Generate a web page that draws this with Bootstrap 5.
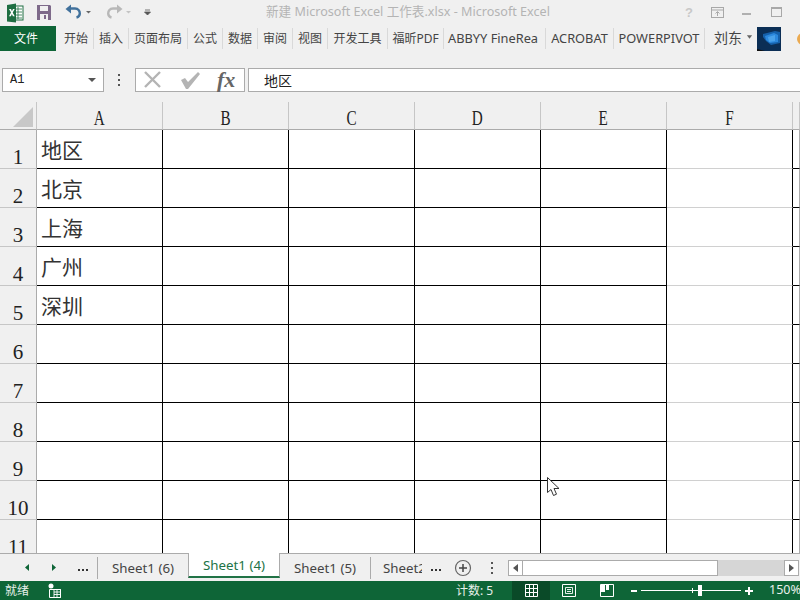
<!DOCTYPE html>
<html lang="zh-CN">
<head>
<meta charset="utf-8">
<title>新建 Microsoft Excel 工作表.xlsx - Microsoft Excel</title>
<link href="https://cdn.jsdelivr.net/npm/bootstrap@5.3.0/dist/css/bootstrap.min.css" rel="stylesheet">
<style>
html,body{margin:0;height:600px;overflow:hidden;background:#f0f0f0}
.xl-app{position:relative;width:800px;height:600px;overflow:hidden;background:#f0f0f0;font-family:"Noto Sans","Noto Sans CJK SC",sans-serif;font-size:12px;color:#444}
.xl-title{height:26px;flex:none;position:relative}
.xl-title svg{flex:none}
.xl-caption{position:absolute;left:266px;top:3px;font-size:12.6px;line-height:18px;color:#b4b4b4;white-space:nowrap}
.xl-tabs{height:25px;flex:none;white-space:nowrap;overflow:hidden}
.xl-file{width:56px;height:25px;background:#0e6537;color:#fff;margin-right:3px;flex:none;font-size:12px;padding-right:4px}
.xl-rt{height:21px;border-right:1px solid #d9d9d9;flex:none;overflow:hidden;justify-content:center;line-height:21px;font-size:12px}
.w35{width:35px}.w59{width:59px}.w60{width:60px}.w56{width:56px}.w102{width:102px;justify-content:flex-start;padding-left:4px}.w68{width:68px}.w91{width:91px}
.xl-lat{font-size:12.8px}
.xl-user{width:52px;padding-left:9px;padding-bottom:3px;flex:none;font-size:14px}
.xl-user svg{flex:none}
.xl-pic{width:24px;height:24px;flex:none;margin-right:16px}
.xl-orange{width:12px;height:12px;border-radius:50%;background:#ebaa50;flex:none}
.xl-fbar{height:24px;margin-top:17px;flex:none}
.xl-name{width:102px;height:24px;margin-left:2px;background:#fff;border:1px solid #ababab;padding:0 7px;font-family:"Liberation Mono",monospace;font-size:12px;color:#222;flex:none}
.xl-dots{width:31px;flex:none}
.xl-btns{width:110px;height:24px;border:1px solid #ababab;background:#fff;flex:none}
.xl-fx{font-family:"Liberation Serif",serif;font-style:italic;font-weight:700;font-size:22px;line-height:20px;color:#666;margin-left:15px}
.xl-input{flex:1;height:24px;margin-left:3px;background:#fff;border:solid #ababab;border-width:1px 0 1px 1px;padding-left:15px;font-size:14px;line-height:22px;color:#222;font-family:"Noto Sans CJK SC",sans-serif}
.xl-gridwrap{margin-top:10px;flex:1;min-height:0;overflow:hidden;position:relative}
.xl-grid{border-collapse:separate;border-spacing:0;table-layout:fixed;width:800px}
.xl-grid th,.xl-grid td{padding:0;box-sizing:border-box}
.xl-grid thead th{height:28px;background:#f0f0f0;border-right:1px solid #c6c6c6;border-bottom:1px solid #ababab;text-align:center;font:400 20px/22px "Liberation Serif",serif;color:#222;vertical-align:middle;padding-top:5px}
.xl-letter{display:inline-block;transform:scaleX(.76)}
.xl-grid tbody th{height:39px;width:37px;background:#f0f0f0;border-right:1px solid #ababab;border-bottom:1px solid #c6c6c6;text-align:center;vertical-align:bottom;font:400 21px/22px "Liberation Serif",serif;color:#222}
.xl-grid td{height:39px;background:#fff;border-right:1px solid #000;border-bottom:1px solid #000;font:400 21px/24px "Noto Sans CJK SC",sans-serif;color:#333;padding:7px 0 0 4px;vertical-align:top;white-space:nowrap}
.xl-grid td.xl-lite{border-bottom-color:#d0d0d0}
.xl-grid td.xl-edge{border-right:1px solid #ababab}
.xl-grid thead th.xl-corner{position:relative;padding:0}
.xl-corner svg{position:absolute;left:13px;top:5px}
.c-head{width:37px}.c-col{width:126px}.c-end{width:7px}
.xl-sheets{height:28px;flex:none;border-top:1px solid #ababab;font-size:13.3px;color:#444;white-space:nowrap}
.xl-nav{width:98px;height:22px;flex:none;position:relative}
.xl-nav svg{position:absolute;left:0;top:-3px}
.xl-st{height:22px;flex:none;line-height:22px;text-align:center;overflow:hidden}
.xl-sep{border-right:1px solid #ababab}
.st1{width:90px}.st3{width:91px}
.st-active{width:92px;height:25px;margin-top:-1px;align-self:flex-start;background:#fff;border:solid #ababab;border-width:0 1px;border-bottom:2px solid #217346;color:#217346;line-height:24px;box-sizing:border-box;flex:none;text-align:center}
.st4{width:51px;margin-right:2px;text-align:left;padding-left:12px}
.xl-more{width:84px;flex:none}
.xl-scroll{width:291px;height:16px;flex:none;background:#d6d6d6;align-self:flex-start;margin-top:6px}
.xl-sbtn{width:15px;height:16px;background:#fff;border:1px solid #ababab;flex:none}
.xl-thumb{width:195px;height:16px;background:#fff;border:1px solid #ababab;border-left:0;flex:none}
.xl-status{height:19px;background:#0e6537;color:#e8f0ea;flex:none;font-size:12px;white-space:nowrap}
.xl-status svg{flex:none}
.xl-ready{width:48px;padding-left:5px;flex:none}
.xl-count{margin-left:395px;width:56px;flex:none}
.xl-view{width:38px;height:19px;flex:none}
.xl-view-on{background:#0a4a28}
.xl-zoom{width:138px;margin-left:5px}
.xl-pct{flex:none;font-size:12.5px}
.xl-cursor{position:absolute;left:547px;top:477px}
</style>
</head>
<body>
<div class="xl-app d-flex flex-column">
  <div class="xl-title d-flex align-items-center">
    <svg width="230" height="26" viewBox="0 0 230 26">
      <rect x="11" y="6" width="12" height="14" fill="#fff" stroke="#1e6e42"/>
      <path d="M15 9h7M15 12h7M15 15h7M15 18h7M18 7v12" stroke="#1e6e42" stroke-width=".8"/>
      <path d="M7 5l9-1.500v19L7 21.500z" fill="#1e6e42"/>
      <path d="M9 9h2l.9 2.200L13 9h1.700l-2 3.500 2 3.700h-1.800l-1-2.300-1 2.300H9l2-3.700z" fill="#fff"/>
      <path d="M37 5h13l1 1v14H37z" fill="#7e6a8a"/>
      <rect x="40" y="6" width="8" height="5" fill="#f0f0f0"/>
      <rect x="40" y="14" width="8" height="6" fill="#f0f0f0"/>
      <rect x="44" y="15" width="2" height="4" fill="#7e6a8a"/>
      <path d="M69 8.500h6c3.500 0 4.800 3 4.800 5s-1.300 3.500-3.300 4" fill="none" stroke="#41719c" stroke-width="2.400"/>
      <path d="M71 4.500l-5.500 4.500 5.500 4.500z" fill="#41719c"/>
      <path d="M86 11h5l-2.500 2.500z" fill="#666"/>
      <path d="M119 8.500h-6c-3.500 0-4.800 3-4.800 5s1.300 3.500 3.300 4" fill="none" stroke="#b8b8b8" stroke-width="2.400"/>
      <path d="M117 4.500l5.500 4.500-5.500 4.500z" fill="#b8b8b8"/>
      <path d="M126 11h5l-2.500 2.500z" fill="#c4c4c4"/>
      <path d="M145 10h5M144.500 12h6l-3 3z" fill="#555" stroke="#555" stroke-width=".8"/>
    </svg>
    <span class="xl-caption">新建 Microsoft Excel 工作表.xlsx - Microsoft Excel</span>
    <svg class="ms-auto" width="120" height="26" viewBox="680 0 120 26">
      <text x="685" y="17" font-family="Liberation Sans, sans-serif" font-weight="700" font-size="13" fill="#c8c8c8">?</text>
      <rect x="711.500" y="7.500" width="12" height="10" fill="none" stroke="#a8a8a8"/>
      <path d="M711 10h13M717.500 16v-4M715.500 13.500l2-2 2 2" fill="none" stroke="#a8a8a8"/>
      <rect x="742" y="13" width="9" height="2" fill="#b0b0b0"/>
      <rect x="771.500" y="7.500" width="10" height="9" fill="none" stroke="#a8a8a8"/>
      <rect x="771" y="7" width="11" height="2" fill="#a8a8a8"/>
    </svg>
  </div>
  <div class="xl-tabs d-flex align-items-center">
    <div class="xl-file d-flex align-items-center justify-content-center">文件</div>
    <div class="xl-rt d-flex w35">开始</div>
    <div class="xl-rt d-flex w35">插入</div>
    <div class="xl-rt d-flex w59">页面布局</div>
    <div class="xl-rt d-flex w35">公式</div>
    <div class="xl-rt d-flex w35">数据</div>
    <div class="xl-rt d-flex w35">审阅</div>
    <div class="xl-rt d-flex w35">视图</div>
    <div class="xl-rt d-flex w60">开发工具</div>
    <div class="xl-rt d-flex w56">福昕PDF</div>
    <div class="xl-rt d-flex w102 xl-lat">ABBYY FineRea</div>
    <div class="xl-rt d-flex w68 xl-lat">ACROBAT</div>
    <div class="xl-rt d-flex w91 xl-lat">POWERPIVOT</div>
    <div class="xl-user d-flex align-items-center gap-1">刘东<svg width="7" height="4" viewBox="0 0 8 4"><path d="M1 0h6L4 4z" fill="#666"/></svg></div>
    <svg class="xl-pic" width="24" height="24" viewBox="0 0 24 24">
      <rect width="24" height="24" fill="#0b2e55"/>
      <path d="M6 7l12-3 5 1v11l-9 2-5-4-3-4z" fill="#1560aa"/>
      <path d="M8 9l9-3 4 2v7l-8 1-4-3z" fill="#2b88dd"/>
      <path d="M11 10l7-2v6l-6 1z" fill="#4aa2ea"/>
      <path d="M0 22l8 2H0z" fill="#111"/>
    </svg>
    <div class="xl-orange"></div>
  </div>
  <div class="xl-fbar d-flex align-items-center">
    <div class="xl-name d-flex align-items-center justify-content-between">A1
      <svg width="8" height="4" viewBox="0 0 8 4"><path d="M0 0h8L4 4z" fill="#555"/></svg>
    </div>
    <div class="xl-dots d-flex justify-content-center">
      <svg width="3" height="12" viewBox="0 0 3 12"><path d="M0 0h2v2H0zM0 5h2v2H0zM0 10h2v2H0z" fill="#555"/></svg>
    </div>
    <div class="xl-btns d-flex align-items-center">
      <svg class="ms-2" width="58" height="18" viewBox="0 0 58 18">
        <path d="M1 1l15 15M16 1L1 16" stroke="#b4b4b4" stroke-width="2.400" fill="none"/>
        <path d="M37 9l4-2 3 4 10-10 2 2-12 15h-2z" fill="#b4b4b4"/>
      </svg>
      <span class="xl-fx">fx</span>
    </div>
    <div class="xl-input">地区</div>
  </div>
  <div class="xl-gridwrap">
    <table class="xl-grid">
      <colgroup><col class="c-head"><col class="c-col"><col class="c-col"><col class="c-col"><col class="c-col"><col class="c-col"><col class="c-col"><col class="c-end"></colgroup>
      <thead>
        <tr>
          <th class="xl-corner"><svg width="20" height="20" viewBox="0 0 20 20"><path d="M20 0v20H0z" fill="#c8c8c8"/></svg></th>
          <th><span class="xl-letter">A</span></th><th><span class="xl-letter">B</span></th><th><span class="xl-letter">C</span></th><th><span class="xl-letter">D</span></th><th><span class="xl-letter">E</span></th><th><span class="xl-letter">F</span></th><th></th>
        </tr>
      </thead>
      <tbody>
        <tr><th>1</th><td>地区</td><td></td><td></td><td></td><td></td><td class="xl-lite"></td><td class="xl-edge"></td></tr>
        <tr><th>2</th><td>北京</td><td></td><td></td><td></td><td></td><td class="xl-lite"></td><td class="xl-edge"></td></tr>
        <tr><th>3</th><td>上海</td><td></td><td></td><td></td><td></td><td class="xl-lite"></td><td class="xl-edge"></td></tr>
        <tr><th>4</th><td>广州</td><td></td><td></td><td></td><td></td><td class="xl-lite"></td><td class="xl-edge"></td></tr>
        <tr><th>5</th><td>深圳</td><td></td><td></td><td></td><td></td><td class="xl-lite"></td><td class="xl-edge"></td></tr>
        <tr><th>6</th><td></td><td></td><td></td><td></td><td></td><td class="xl-lite"></td><td class="xl-edge"></td></tr>
        <tr><th>7</th><td></td><td></td><td></td><td></td><td></td><td class="xl-lite"></td><td class="xl-edge"></td></tr>
        <tr><th>8</th><td></td><td></td><td></td><td></td><td></td><td class="xl-lite"></td><td class="xl-edge"></td></tr>
        <tr><th>9</th><td></td><td></td><td></td><td></td><td></td><td class="xl-lite"></td><td class="xl-edge"></td></tr>
        <tr><th>10</th><td></td><td></td><td></td><td></td><td></td><td class="xl-lite"></td><td class="xl-edge"></td></tr>
        <tr><th>11</th><td></td><td></td><td></td><td></td><td></td><td class="xl-lite"></td><td class="xl-edge"></td></tr>
      </tbody>
    </table>
  </div>
  <div class="xl-sheets d-flex align-items-center">
    <div class="xl-nav xl-sep">
      <svg width="96" height="27" viewBox="0 0 96 27">
        <path d="M29 10v7l-4-3.500z" fill="#0e6537"/>
        <path d="M52 10v7l4-3.500z" fill="#0e6537"/>
        <path d="M78 15h2v2h-2zM82 15h2v2h-2zM86 15h2v2h-2z" fill="#333"/>
      </svg>
    </div>
    <div class="xl-st st1">Sheet1 (6)</div>
    <div class="st-active">Sheet1 (4)</div>
    <div class="xl-st st3 xl-sep">Sheet1 (5)</div>
    <div class="xl-st st4">Sheet2</div>
    <svg class="xl-more" width="84" height="27" viewBox="0 0 84 27">
      <path d="M7 15h2v2H7zM11 15h2v2h-2zM15 15h2v2h-2z" fill="#333"/>
      <circle cx="39" cy="14" r="7.500" fill="none" stroke="#666" stroke-width="1.200"/>
      <path d="M35 14h8M39 10v8" stroke="#444" stroke-width="1.500"/>
      <path d="M67 8h2v2h-2zM67 13h2v2h-2zM67 18h2v2h-2z" fill="#555"/>
    </svg>
    <div class="xl-scroll d-flex">
      <div class="xl-sbtn d-flex align-items-center justify-content-center"><svg width="5" height="8" viewBox="0 0 5 8"><path d="M5 0v8L0 4z" fill="#555"/></svg></div>
      <div class="xl-thumb"></div>
      <div class="xl-sbtn ms-auto d-flex align-items-center justify-content-center"><svg width="5" height="8" viewBox="0 0 5 8"><path d="M0 0v8l5-4z" fill="#555"/></svg></div>
    </div>
  </div>
  <div class="xl-status d-flex align-items-center">
    <div class="xl-ready">就绪</div>
    <svg width="13" height="15" viewBox="0 0 13 15">
      <circle cx="3" cy="3" r="2.500" fill="#fff"/>
      <path d="M1.500 6.500h11v8h-11z" fill="none" stroke="#fff"/>
      <path d="M6 6.500h6.500v8H6zM6 9h6.500M6 11.500h6.500M9 6.500v8" fill="none" stroke="#fff" stroke-width=".9"/>
    </svg>
    <div class="xl-count">计数: 5</div>
    <div class="xl-view xl-view-on d-flex align-items-center justify-content-center">
      <svg width="13" height="13" viewBox="0 0 13 13"><path d="M.5.500h12v12H.500zM4.500.500v12M8.500.500v12M.5 4.500h12M.5 8.500h12" fill="none" stroke="#fff"/></svg>
    </div>
    <div class="xl-view d-flex align-items-center justify-content-center">
      <svg width="14" height="13" viewBox="0 0 14 13"><path d="M.5.500h13v12H.500z" fill="none" stroke="#fff"/><path d="M3.500 3.500h7v6h-7zM5 5.500h4M5 7.500h4" fill="none" stroke="#fff" stroke-width=".9"/></svg>
    </div>
    <div class="xl-view d-flex align-items-center justify-content-center">
      <svg width="14" height="13" viewBox="0 0 14 13"><path d="M.5.500h13v12H.500z" fill="none" stroke="#fff"/><path d="M1 1h4v7H1zM6 1h3v5H6z" fill="#fff"/></svg>
    </div>
    <svg class="xl-zoom" width="138" height="19" viewBox="0 0 138 19">
      <path d="M0 9h6v2H0z" fill="#fff"/>
      <path d="M10 9.500h100" stroke="#fff"/>
      <path d="M61.500 7v5" stroke="#fff"/>
      <rect x="67" y="4" width="4" height="11" fill="#fff"/>
      <path d="M114 9h8v2h-8zM117 6h2v8h-2z" fill="#fff"/>
    </svg>
    <div class="xl-pct">150%</div>
  </div>
  <svg class="xl-cursor" width="13" height="20" viewBox="0 0 13 20">
    <path d="M.5.500v15l3.500-3 2.500 6 3-1.300-2.500-5.700h5z" fill="#fff" stroke="#333"/>
  </svg>
</div>
</body>
</html>
